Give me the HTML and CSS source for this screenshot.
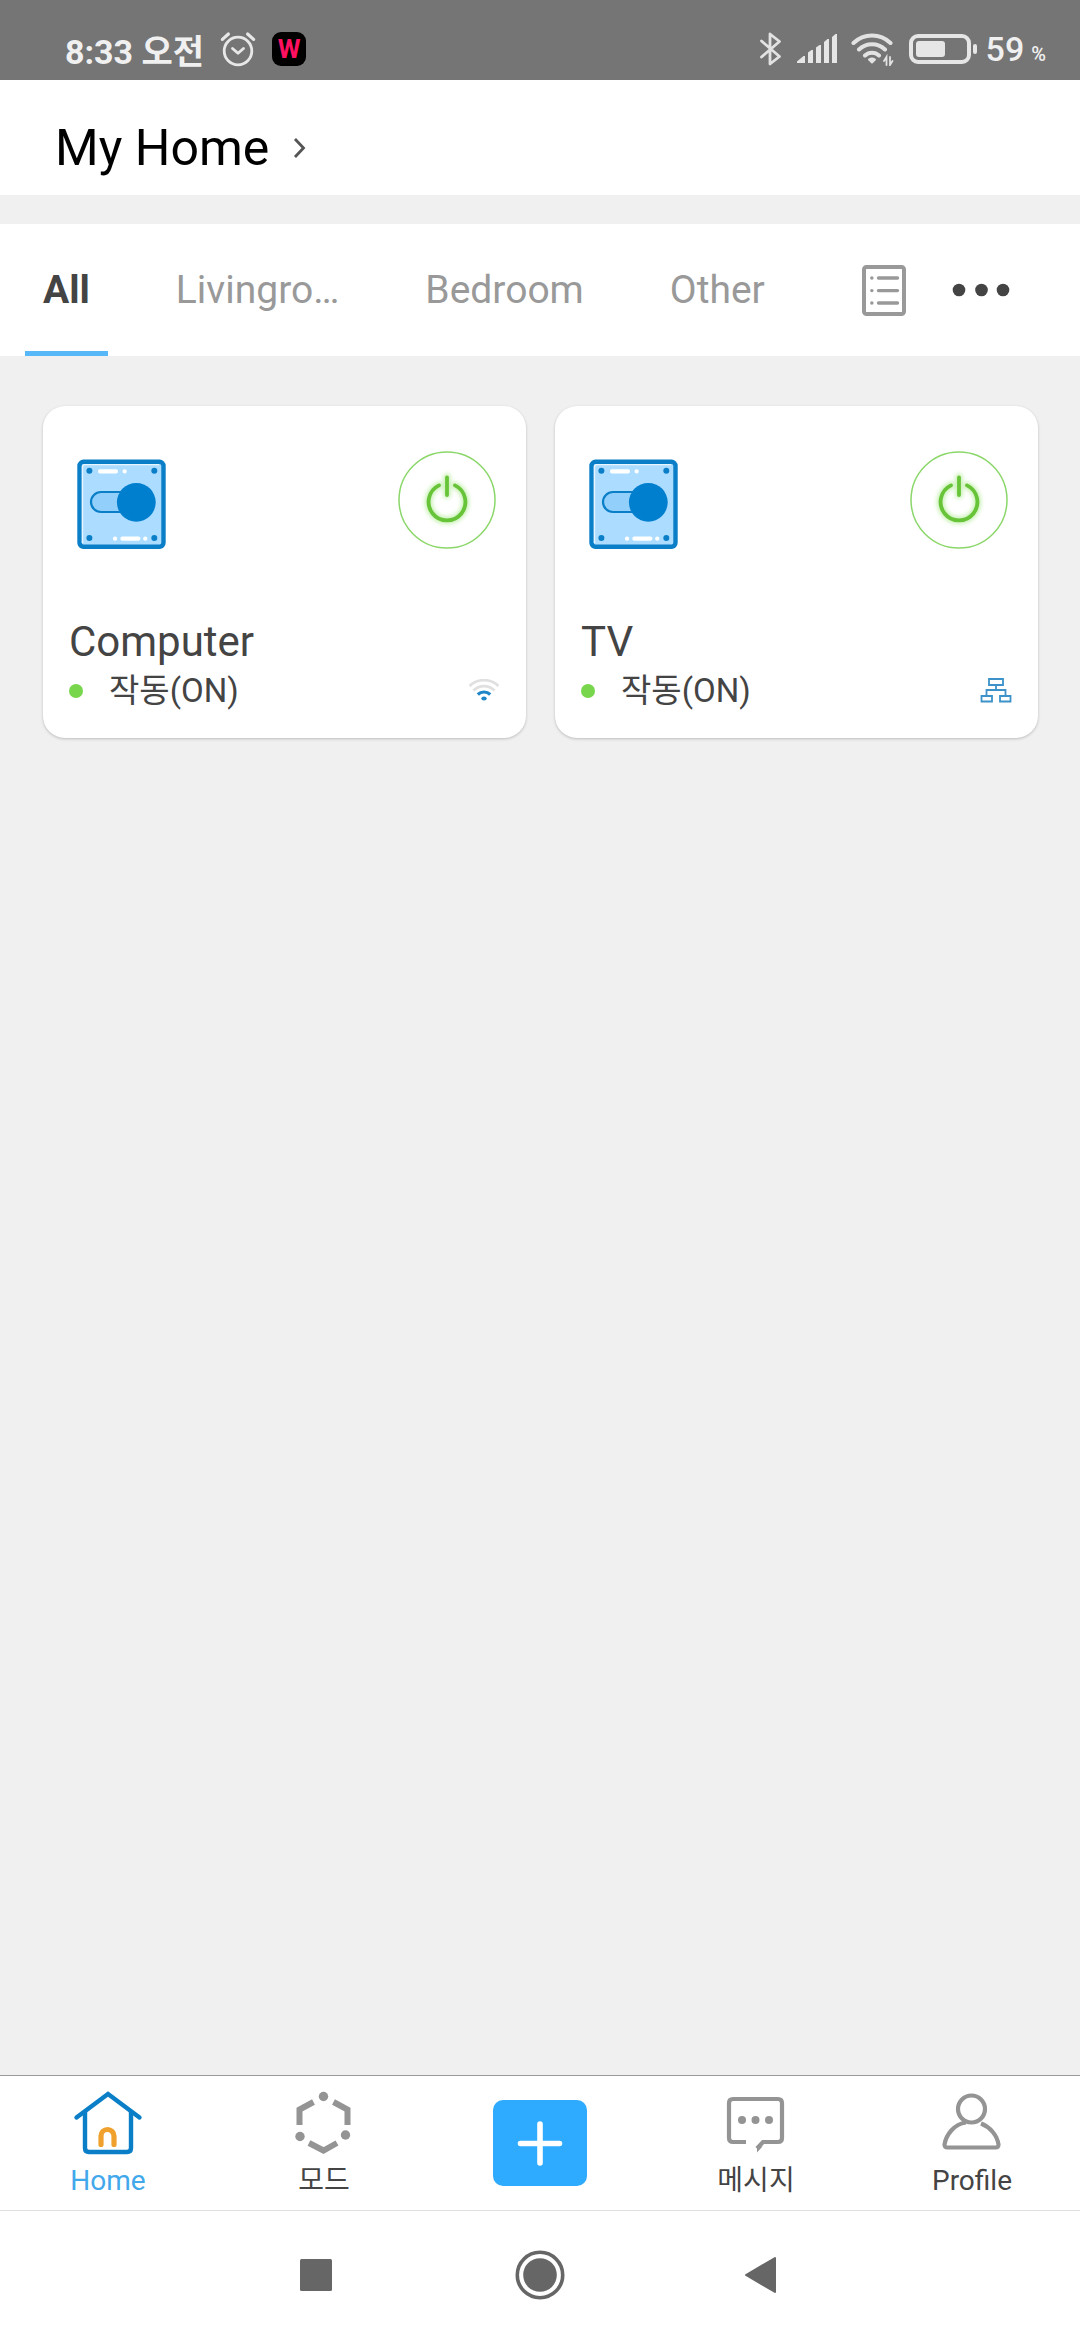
FILE: index.html
```html
<!DOCTYPE html>
<html lang="ko">
<head>
<meta charset="utf-8">
<meta name="viewport" content="width=device-width">
<title>My Home</title>
<link rel="stylesheet" href="styles.css">
</head>
<body>
<svg class="defs" width="0" height="0" aria-hidden="true">
  <defs>
    <filter id="glow" x="-20%" y="-20%" width="140%" height="140%"><feGaussianBlur stdDeviation="2"/></filter>
    <symbol id="switch" viewBox="0 0 90 90">
      <rect x="2.5" y="2.8" width="84" height="85" rx="4" fill="#acdcff" stroke="#0a7fc8" stroke-width="4.4"/>
      <path d="M5.5 84V8q0-2.4 2.4-2.4H82" fill="none" stroke="#e6f5ff" stroke-width="1.4"/>
      <rect x="14" y="33" width="48" height="20" rx="10" fill="#92d0fb" stroke="#0a7fc8" stroke-width="2.2"/>
      <circle cx="59.3" cy="43.3" r="19.4" fill="#007fcf"/>
      <g fill="#0a7fc8"><circle cx="12.4" cy="11.8" r="3"/><circle cx="77.3" cy="11.8" r="3"/><circle cx="12.4" cy="79" r="3"/><circle cx="77.3" cy="79" r="3"/></g>
      <g fill="none" stroke="#fff" stroke-width="4.2" stroke-linecap="round"><path d="M23 12.4h16M47.6 12.4h.1M38 79.7h.1M45.4 79.7h16M68.2 79.7h.1"/></g>
    </symbol>
    <symbol id="power" viewBox="0 0 98 98">
      <circle cx="49" cy="49" r="48" fill="none" stroke="#8bd76a" stroke-width="1.5"/>
      <g fill="none" stroke-linecap="round">
        <path d="M41 34.4a18.4 18.4 0 1 0 16 0M49 26v18" stroke="#c4f0af" stroke-width="7" filter="url(#glow)"/>
        <path d="M41 34.4a18.4 18.4 0 1 0 16 0M49 26.5v17.5" stroke="#67c438" stroke-width="3.8"/>
      </g>
    </symbol>
  </defs>
</svg>

<div class="status-bar">
  <div class="status-group">
    <span class="clock">8:33 오전</span>
    <svg width="36" height="36" viewBox="0 0 36 36" fill="none" stroke="#e8e8e8" stroke-width="2.8" stroke-linecap="round" stroke-linejoin="round"><circle cx="18" cy="20" r="13.8"/><path d="M12.5 17.5 18 22.3l5.5-4.8"/><path d="M2.4 8.4 8.4 3M27.6 3l6 5.4" stroke-width="3.2"/></svg>
    <span class="app-badge">W</span>
  </div>
  <div class="status-group status-right">
    <div class="status-icons">
      <svg width="24" height="36" viewBox="0 0 24 36" fill="none" stroke="#e2e2e2" stroke-width="2.8" stroke-linejoin="round" stroke-linecap="round"><path d="M2.500 10 20.500 25.500 11 33V3l9.500 7.500L2.500 26"/></svg>
      <svg width="40" height="30" viewBox="0 0 40 30" fill="#e6e6e6"><path d="M0 29v-1.500L6.500 22H8v7zM11 29V18.500L14.500 16H16v13zM19 29V13.500L22.500 11H24v18zM27 29V8l3.500-3H32v24zM35 29V3l3.500-3H40v29z"/></svg>
      <svg width="44" height="34" viewBox="0 0 44 34" fill="none" stroke="#e2e2e2" stroke-width="4" stroke-linecap="round"><path d="M2.500 11a26.500 26.500 0 0 1 37 0M8 17.500a18.500 18.500 0 0 1 26 0M14 23.500a10 10 0 0 1 14 0"/><path d="M18 27.500q3-2 6 0l-3 3z" fill="#e2e2e2" stroke-width="2" stroke-linejoin="round"/><path d="M35.500 33v-8l-2.500 4M39 25v8l2.500-4" stroke-width="1.800"/></svg>
      <svg width="68" height="30" viewBox="0 0 68 30"><rect x="2" y="2" width="58" height="26" rx="7" fill="none" stroke="#e6e6e6" stroke-width="4"/><rect x="7" y="7" width="29" height="16" rx="3" fill="#e6e6e6"/><rect x="64" y="10" width="4" height="10" rx="2" fill="#e6e6e6"/></svg>
    </div>
    <span class="charge">59<small>%</small></span>
  </div>
</div>

<header class="header">
  <button class="home-picker" type="button">My Home
    <svg width="14" height="22" viewBox="0 0 14 22" fill="none" stroke="#555" stroke-width="2.800"><path d="M2 2l8.500 9L2 20"/></svg>
  </button>
</header>

<div class="toolbar">
  <nav class="tabs" aria-label="Rooms">
    <button class="tab tab-active" type="button">All</button>
    <button class="tab" type="button">Livingro…</button>
    <button class="tab" type="button">Bedroom</button>
    <button class="tab" type="button">Other</button>
  </nav>
  <div class="tools">
    <button class="icon-button" type="button" aria-label="List"><svg width="44" height="52" viewBox="0 0 44 52"><rect x="2" y="3" width="40" height="47" rx="2.500" fill="none" stroke="#999" stroke-width="4"/><g stroke="#999" stroke-width="3.400" stroke-linecap="round"><path d="M16.500 14h19M16.500 26.600h19M16.500 39h19M9.800 14h.1M9.800 26.600h.1M9.800 39h.1"/></g></svg></button>
    <button class="icon-button" type="button" aria-label="More"><svg width="58" height="14" viewBox="0 0 58 14" fill="#444"><circle cx="7" cy="7" r="6.300"/><circle cx="29.500" cy="7" r="6.300"/><circle cx="51" cy="7" r="6.300"/></svg></button>
  </div>
</div>

<main class="devices">
  <article class="card">
    <div class="card-top">
      <svg width="90" height="90"><use href="#switch"/></svg>
      <button class="power" type="button" aria-label="Computer power"><svg width="98" height="98"><use href="#power"/></svg></button>
    </div>
    <h2 class="device-name">Computer</h2>
    <div class="device-status">
      <span class="dot"></span>
      <span class="state">작동(ON)</span>
      <svg width="32" height="24" viewBox="0 0 32 24" fill="none" stroke="#e0e0e0" stroke-width="2.800"><path d="M1.500 7a21 21 0 0 1 29 0M5.500 11.500a15 15 0 0 1 21 0"/><path d="M9.800 15.500a9 9 0 0 1 12.400 0" stroke="#1f87c8" stroke-width="3.200"/><ellipse cx="16" cy="19.500" rx="2.700" ry="2" fill="#1f87c8" stroke="none"/></svg>
    </div>
  </article>
  <article class="card">
    <div class="card-top">
      <svg width="90" height="90"><use href="#switch"/></svg>
      <button class="power" type="button" aria-label="TV power"><svg width="98" height="98"><use href="#power"/></svg></button>
    </div>
    <h2 class="device-name">TV</h2>
    <div class="device-status">
      <span class="dot"></span>
      <span class="state">작동(ON)</span>
      <svg width="32" height="26" viewBox="0 0 32 26" fill="none" stroke="#3c92c9" stroke-width="1.800"><path d="M9 1h14v6H9zM1.500 18h10.500v5.500H1.500zM20 18h10.500v5.500H20zM16 7v5M6.500 18v-6h19v6"/></svg>
    </div>
  </article>
</main>

<nav class="bottom-nav" aria-label="Main">
  <a class="nav-item nav-active" href="#home">
    <svg width="72" height="72" viewBox="0 0 72 72" fill="none" stroke="#0a7fc8" stroke-width="4.400" stroke-linecap="round"><path d="M4.500 30.500 36 7l31.500 23.500"/><path d="M13 25v36q0 4 4 4h38q4 0 4-4V25"/><path d="M29 57.500V49a6.500 6.500 0 0 1 13 0v8.500" stroke="#f0a02c" stroke-width="5.200"/></svg>
    Home
  </a>
  <a class="nav-item" href="#mode">
    <svg width="72" height="72" viewBox="0 0 72 72" fill="none" stroke="#949494" stroke-width="6"><path d="M25.500 15 11.500 22.500V38M45.500 15l14 7.500V38M21 56l14.500 7.500L49 56"/><g fill="#949494" stroke="none"><circle cx="35.500" cy="9.500" r="4.700"/><circle cx="12" cy="49.500" r="4.700"/><circle cx="57.500" cy="48" r="4.700"/></g></svg>
    모드
  </a>
  <button class="add" type="button" aria-label="Add"><svg width="48" height="48" viewBox="0 0 48 48" stroke="#fff" stroke-width="5.600" stroke-linecap="round"><path d="M24 5v39M4.500 24.500h39"/></svg></button>
  <a class="nav-item" href="#messages">
    <svg width="72" height="72" viewBox="0 0 72 72" fill="none" stroke="#949494" stroke-width="4.200"><path d="M26 55H13q-4 0-4-4V16q0-4 4-4h45q4 0 4 4v35q0 4-4 4H43l-6 6.500"/><path d="M37 58.500v7l5.500-6z" fill="#949494" stroke="none"/><g fill="#949494" stroke="none"><circle cx="22" cy="33" r="4"/><circle cx="35.500" cy="33" r="4"/><circle cx="49" cy="33" r="4"/></g></svg>
    메시지
  </a>
  <a class="nav-item" href="#profile">
    <svg width="72" height="72" viewBox="0 0 72 72" fill="none" stroke="#949494" stroke-width="4.200" stroke-linejoin="round"><circle cx="35.500" cy="22" r="13.500"/><path d="M45 36.500C54 40 61 48 62.500 57.500q.3 3-3 3h-48q-3.300 0-3-3C10 48 18 37 30 35.500"/></svg>
    Profile
  </a>
</nav>

<div class="system-nav">
  <button class="icon-button" type="button" aria-label="Recent apps"><svg width="50" height="50" viewBox="0 0 50 50" fill="#666"><rect x="9" y="9" width="32" height="32" rx="1.500"/></svg></button>
  <button class="icon-button" type="button" aria-label="Home screen"><svg width="50" height="50" viewBox="0 0 50 50" fill="#666"><circle cx="25" cy="25" r="22.700" fill="none" stroke="#666" stroke-width="3.600"/><circle cx="25" cy="25" r="16.800"/></svg></button>
  <button class="icon-button" type="button" aria-label="Back"><svg width="50" height="50" viewBox="0 0 50 50" fill="#666" stroke="#666" stroke-width="2" stroke-linejoin="round"><path d="M7 25 36 8v34z"/></svg></button>
</div>
</body>
</html>
```
FILE: styles.css
```css
* { box-sizing: border-box; }

body {
  margin: 0;
  min-height: 100vh;
  display: flex;
  flex-direction: column;
  background: #f0f0f0;
  color: #444;
  font-family: Roboto, "Noto Sans CJK KR", sans-serif;
}

svg { display: block; flex: none; }

.defs { position: absolute; }

button {
  margin: 0;
  padding: 0;
  border: 0;
  background: none;
  color: inherit;
  font: inherit;
}

a { color: inherit; text-decoration: none; }

/* Status bar */
.status-bar {
  display: flex;
  justify-content: space-between;
  height: 80px;
  padding: 18px 34px 0 65px;
  background: #757575;
  color: #f0f0f0;
  font-size: 34px;
}

.status-group { display: flex; align-items: center; gap: 16px; }
.status-right { gap: 9px; }
.status-icons { display: flex; align-items: center; gap: 14px; }
.clock { font-weight: 700; }

.app-badge {
  width: 34px;
  height: 34px;
  border-radius: 9px;
  background: #000;
  color: #ff1060;
  font-family: "Liberation Sans Narrow", Roboto, sans-serif;
  font-size: 26px;
  font-weight: 700;
  line-height: 34px;
  text-align: center;
}

.charge { font-weight: 500; }
.charge small { margin-left: 7px; font-size: 20px; }

/* Header */
.header {
  padding: 38px 55px 17px;
  background: #fff;
  color: #000;
}

.home-picker {
  display: flex;
  align-items: center;
  gap: 24px;
  font-size: 50px;
  line-height: 60px;
}

/* Room tabs */
.toolbar {
  display: flex;
  justify-content: space-between;
  height: 132px;
  margin-top: 29px;
  padding: 0 70px 0 25px;
  background: #fff;
}

.tabs { display: flex; gap: 50px; }

.tab {
  padding: 5px 18px 0;
  border-bottom: 5px solid transparent;
  color: #999;
  font-size: 39px;
}

.tab-active {
  border-bottom-color: #56b8f8;
  color: #444;
  font-weight: 700;
}

.tools { display: flex; align-items: center; gap: 46px; }

/* Devices */
.devices {
  flex: 1;
  display: grid;
  grid-template-columns: 1fr 1fr;
  align-items: start;
  gap: 29px;
  padding: 50px 42px 50px 43px;
}

.card {
  padding: 45px 26px 24px;
  border-radius: 22px;
  background: #fff;
  box-shadow: 0 1px 3px rgba(0, 0, 0, 0.22);
}

.card-top {
  display: flex;
  justify-content: space-between;
  align-items: flex-end;
  padding: 0 4px 0 8px;
}

.power { border-radius: 50%; }

.device-name {
  margin: 67px 0 0;
  font-size: 42px;
  font-weight: 400;
  line-height: 52px;
}

.device-status {
  display: flex;
  align-items: center;
  font-size: 33px;
  line-height: 46px;
}

.dot {
  width: 14px;
  height: 14px;
  border-radius: 50%;
  background: #77d64b;
}

.state { flex: 1; margin-left: 26px; }

/* Bottom navigation */
.bottom-nav {
  display: grid;
  grid-template-columns: repeat(5, 1fr);
  padding: 11px 0 12px;
  border-top: 1px solid #999;
  border-bottom: 1px solid #e0e0e0;
  background: #fff;
}

.nav-item {
  display: flex;
  flex-direction: column;
  align-items: center;
  gap: 5px;
  font-size: 28px;
  line-height: 34px;
}

.nav-active { color: #42a8ec; }

.add {
  display: grid;
  place-items: center;
  place-self: center;
  width: 94px;
  height: 86px;
  border-radius: 10px;
  background: #2eaaff;
}

.system-nav {
  display: flex;
  justify-content: center;
  gap: 174px;
  padding: 39px 0 40px;
  background: #fff;
}
```
